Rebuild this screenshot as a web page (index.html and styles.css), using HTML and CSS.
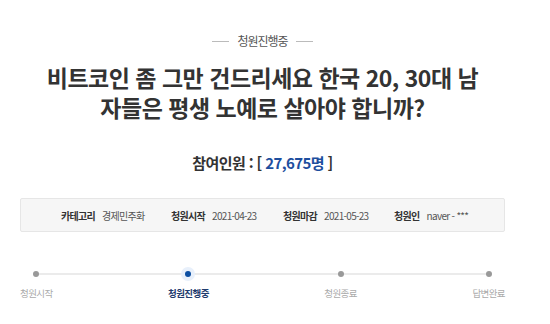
FILE: index.html
```html
<!DOCTYPE html>
<html lang="ko">
<head>
  <meta charset="UTF-8" />
  <meta name="viewport" content="width=device-width, initial-scale=1.0" />
  <title>청원진행중</title>
  <link rel="stylesheet" href="styles.css">
</head>
<body>
  <div class="petition">
    <div class="status-tag"><span>청원진행중</span></div>
    <h1 class="petition-title">비트코인 좀 그만 건드리세요 한국 20, 30대 남<br>자들은 평생 노예로 살아야 합니까?</h1>
    <p class="counter">참여인원 : [ <span class="count">27,675명</span> ]</p>

    <ul class="info-box">
      <li><b>카테고리</b> 경제민주화</li>
      <li><b>청원시작</b> 2021-04-23</li>
      <li><b>청원마감</b> 2021-05-23</li>
      <li><b>청원인</b> naver - ***</li>
    </ul>

    <div class="progress">
      <div class="step"><i></i><span>청원시작</span></div>
      <div class="step current"><i></i><span>청원진행중</span></div>
      <div class="step"><i></i><span>청원종료</span></div>
      <div class="step"><i></i><span>답변완료</span></div>
    </div>
  </div>
</body>
</html>
```

FILE: styles.css
```css
body { margin: 0; background: #fff; color: #333; font-family: "Noto Sans CJK KR", "Noto Sans", sans-serif; }
.petition { width: 485px; margin-left: 20px; padding-top: 32px; }
.status-tag { display: flex; justify-content: center; align-items: center; gap: 8px; font-size: 12px; letter-spacing: -1px; line-height: 18px; color: #555; }
.status-tag::before, .status-tag::after { content: ""; width: 17px; border-top: 1px solid #bbb; }
.petition-title { margin: 12px 0 0; text-align: center; font-size: 23px; line-height: 30px; font-weight: bold; color: #333; letter-spacing: -0.5px; }
.counter { margin: 30px 0 0; text-align: center; font-size: 15px; line-height: 22px; font-weight: bold; color: #333; letter-spacing: -0.6px; }
.count { color: #1d4e9e; }
.info-box { list-style: none; margin: 24px 0 0; padding: 0 0 0 40px; height: 32px; display: grid; grid-template-columns: 110px 112px 111px auto; align-items: center; background: #f6f6f6; border: 1px solid #e6e6e6; border-radius: 2px; font-size: 10px; letter-spacing: -0.7px; color: #555; white-space: nowrap; }
.info-box b { color: #333; margin-right: 5px; }
.progress { position: relative; display: flex; justify-content: space-between; margin-top: 39px; }
.progress::before { content: ""; position: absolute; left: 15px; right: 16px; top: 2px; border-top: 2px solid #ebebeb; }
.step { position: relative; display: flex; flex-direction: column; align-items: center; gap: 10px; font-size: 9.5px; line-height: 12px; letter-spacing: -0.6px; color: #aaa; }
.step i { width: 6px; height: 6px; border-radius: 50%; background: #999; }
.step.current i { background: #0b4ea2; box-shadow: 0 0 0 4px #e8f0fb; }
.step.current span { color: #1f3c6e; font-weight: bold; }
```
